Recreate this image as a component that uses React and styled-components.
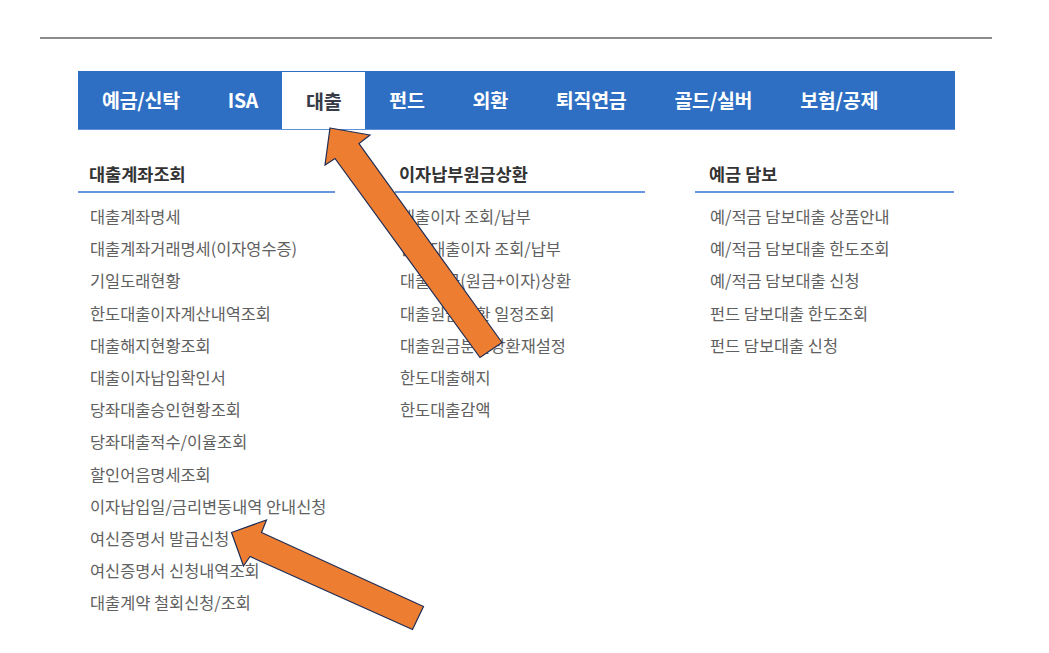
import React from "react";
import styled, { createGlobalStyle } from "styled-components";

const GlobalStyle = createGlobalStyle`
  * { box-sizing: border-box; }
  body {
    margin: 0;
    background: #fff;
    font-family: "Noto Sans CJK KR", "Noto Sans", sans-serif;
  }
`;

const tabs = ["예금/신탁", "ISA", "대출", "펀드", "외환", "퇴직연금", "골드/실버", "보험/공제"];

const columns = [
  {
    title: "대출계좌조회",
    w: 257,
    pad: 11,
    gap: 60,
    items: [
      "대출계좌명세",
      "대출계좌거래명세(이자영수증)",
      "기일도래현황",
      "한도대출이자계산내역조회",
      "대출해지현황조회",
      "대출이자납입확인서",
      "당좌대출승인현황조회",
      "당좌대출적수/이율조회",
      "할인어음명세조회",
      "이자납입일/금리변동내역 안내신청",
      "여신증명서 발급신청",
      "여신증명서 신청내역조회",
      "대출계약 철회신청/조회",
    ],
  },
  {
    title: "이자납부원금상환",
    w: 250,
    pad: 4,
    gap: 50,
    items: [
      "대출이자 조회/납부",
      "한도대출이자 조회/납부",
      "대출원금(원금+이자)상환",
      "대출원금상환 일정조회",
      "대출원금분할상환재설정",
      "한도대출해지",
      "한도대출감액",
    ],
  },
  {
    title: "예금 담보",
    w: 259,
    pad: 14,
    gap: 0,
    items: [
      "예/적금 담보대출 상품안내",
      "예/적금 담보대출 한도조회",
      "예/적금 담보대출 신청",
      "펀드 담보대출 한도조회",
      "펀드 담보대출 신청",
    ],
  },
];

export default function App() {
  return (
    <Page>
      <GlobalStyle />
      <Rule />
      <Menu>
        <TabBar>
          {tabs.map((t) => (
            <Tab key={t} $active={t === "대출"}>
              {t}
            </Tab>
          ))}
        </TabBar>
        <Columns>
          {columns.map((c) => (
            <Column key={c.title} $w={c.w} $gap={c.gap}>
              <ColumnTitle $pad={c.pad}>{c.title}</ColumnTitle>
              <ItemList $pad={c.pad}>
                {c.items.map((i) => (
                  <Item key={i}>{i}</Item>
                ))}
              </ItemList>
            </Column>
          ))}
        </Columns>
      </Menu>
      <Arrows viewBox="0 0 1049 653">
        <polygon points="330,128 370,135 359,143.5 502,342.5 480,357.5 335,158.5 325,165" />
        <polygon points="231.5,532.5 266.5,520 261.5,532.5 423.5,606.5 412.5,629.5 250,556.5 243.5,566" />
      </Arrows>
    </Page>
  );
}

const Page = styled.div`
  position: relative;
  width: 1049px;
  height: 653px;
  overflow: hidden;
`;

const Rule = styled.div`
  margin: 37px 0 0 40px;
  width: 952px;
  height: 2px;
  background: #8c8c8c;
`;

const Menu = styled.div`
  margin: 32px 0 0 78px;
  width: 877px;
`;

const TabBar = styled.ul`
  display: flex;
  margin: 0;
  padding: 0;
  list-style: none;
  height: 59px;
  background: #2e6fc4;
  border-bottom: 1px solid #5e92d8;
`;

const Tab = styled.li`
  padding: 0 24px;
  margin-top: ${(p) => (p.$active ? "1px" : "0")};
  line-height: ${(p) => (p.$active ? "57px" : "58px")};
  font-size: 19.5px;
  font-weight: 700;
  letter-spacing: -0.3px;
  color: ${(p) => (p.$active ? "#363b47" : "#fff")};
  background: ${(p) => (p.$active ? "#fff" : "transparent")};
`;

const Columns = styled.div`
  display: flex;
  align-items: flex-start;
`;

const Column = styled.div`
  width: ${(p) => p.$w}px;
  margin-right: ${(p) => p.$gap}px;
`;

const ColumnTitle = styled.h3`
  margin: 32px 0 0;
  padding: 0 0 5px ${(p) => p.$pad}px;
  font-size: 17.5px;
  line-height: 24px;
  font-weight: 700;
  color: #333;
  border-bottom: 2px solid #6897de;
`;

const ItemList = styled.ul`
  margin: 0;
  padding: 7px 0 0 ${(p) => p.$pad + 1}px;
  list-style: none;
`;

const Item = styled.li`
  font-size: 16.4px;
  line-height: 32.2px;
  color: #606060;
  white-space: nowrap;
`;

const Arrows = styled.svg`
  position: absolute;
  left: 0;
  top: 0;
  width: 1049px;
  height: 653px;
  pointer-events: none;

  polygon {
    fill: #ed7d31;
    stroke: #1f2d55;
    stroke-width: 1.2;
    stroke-linejoin: miter;
  }
`;
